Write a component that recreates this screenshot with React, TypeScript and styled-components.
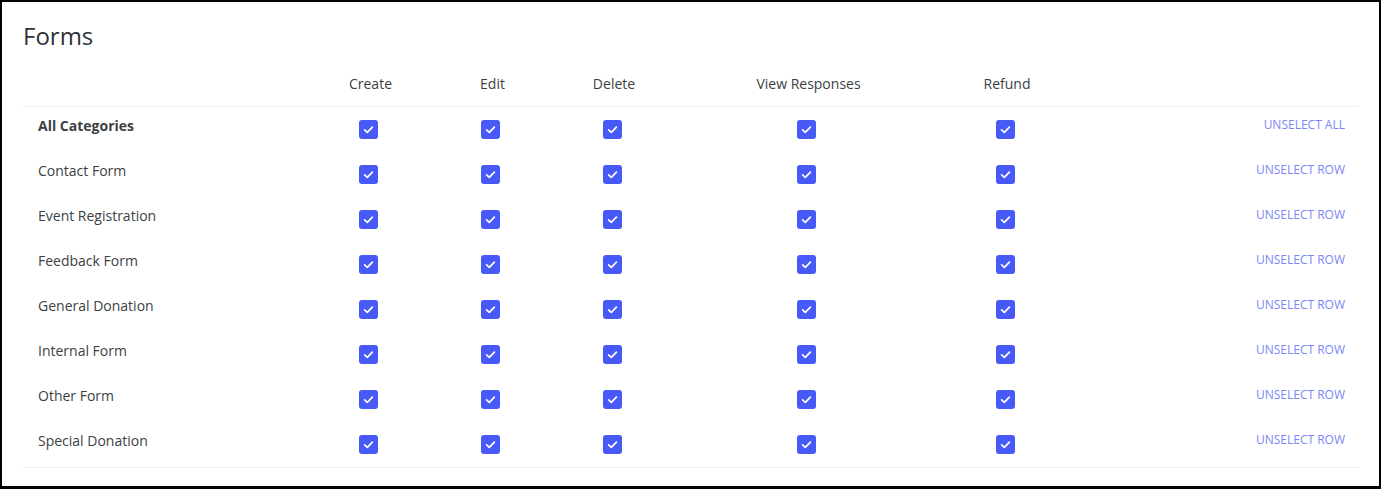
import styled, { createGlobalStyle } from 'styled-components';

const GlobalStyle = createGlobalStyle`
  html, body {
    margin: 0;
    padding: 0;
    background: #fff;
  }
  body {
    font-family: 'Open Sans', 'Liberation Sans', sans-serif;
  }
`;

const Frame = styled.div`
  box-sizing: border-box;
  height: 489px;
  border: 2px solid #000;
  border-bottom-width: 3px;
  padding: 18px 20px 0;
  background: #fff;
  overflow: hidden;
`;

const Title = styled.h1`
  margin: 0 0 22px 1px;
  font-size: 24px;
  line-height: 32px;
  font-weight: 400;
  color: #2f3237;
`;

const Table = styled.div`
  border-bottom: 1px solid #efefef;
`;

const Row = styled.div<{ $header?: boolean }>`
  display: grid;
  grid-template-columns: 288px 121px 123px 120px 269px 128px 1fr;
  align-items: start;
  height: ${(p) => (p.$header ? '32px' : '45px')};
  box-sizing: ${(p) => (p.$header ? 'content-box' : 'border-box')};
  padding-top: ${(p) => (p.$header ? '0' : '9px')};
  border-bottom: ${(p) => (p.$header ? '1px solid #efefef' : 'none')};
`;

const HeadCell = styled.div`
  font-size: 14px;
  line-height: 20px;
  color: #3c3f44;
  text-align: center;
`;

const Label = styled.div<{ $bold?: boolean }>`
  padding-left: 16px;
  font-size: 14px;
  line-height: 20px;
  font-weight: ${(p) => (p.$bold ? 700 : 400)};
  color: #3c3f44;
`;

const BoxCell = styled.div`
  display: flex;
  justify-content: center;
`;

const Check = styled.span`
  display: block;
  width: 19px;
  height: 19px;
  margin: 4px 4px 0 0;
  border-radius: 3px;
  background: #4759f6;
  svg {
    display: block;
  }
`;

const Action = styled.button`
  justify-self: end;
  margin: 1px 14px 0 0;
  padding: 0;
  border: 0;
  background: none;
  font-family: inherit;
  font-size: 12px;
  line-height: 16px;
  color: #7b86f7;
  text-transform: uppercase;
  cursor: pointer;
`;

const columns = ['Create', 'Edit', 'Delete', 'View Responses', 'Refund'];

const categories = [
  'Contact Form',
  'Event Registration',
  'Feedback Form',
  'General Donation',
  'Internal Form',
  'Other Form',
  'Special Donation',
];

function CheckBox() {
  return (
    <Check>
      <svg width="19" height="19" viewBox="0 0 19 19">
        <path d="M5.6 9.9 L8.3 12.4 L13.4 7.1" fill="none" stroke="#fff" strokeWidth="1.7" strokeLinecap="round" strokeLinejoin="round" />
      </svg>
    </Check>
  );
}

function PermRow({ label, bold, action }: { label: string; bold?: boolean; action: string }) {
  return (
    <Row>
      <Label $bold={bold}>{label}</Label>
      {columns.map((c) => (
        <BoxCell key={c}>
          <CheckBox />
        </BoxCell>
      ))}
      <Action>{action}</Action>
    </Row>
  );
}

export default function App() {
  return (
    <>
      <GlobalStyle />
      <Frame>
        <Title>Forms</Title>
        <Table>
          <Row $header>
            <div />
            {columns.map((c) => (
              <HeadCell key={c}>{c}</HeadCell>
            ))}
            <div />
          </Row>
          <PermRow label="All Categories" bold action="Unselect all" />
          {categories.map((cat) => (
            <PermRow key={cat} label={cat} action="Unselect row" />
          ))}
        </Table>
      </Frame>
    </>
  );
}
